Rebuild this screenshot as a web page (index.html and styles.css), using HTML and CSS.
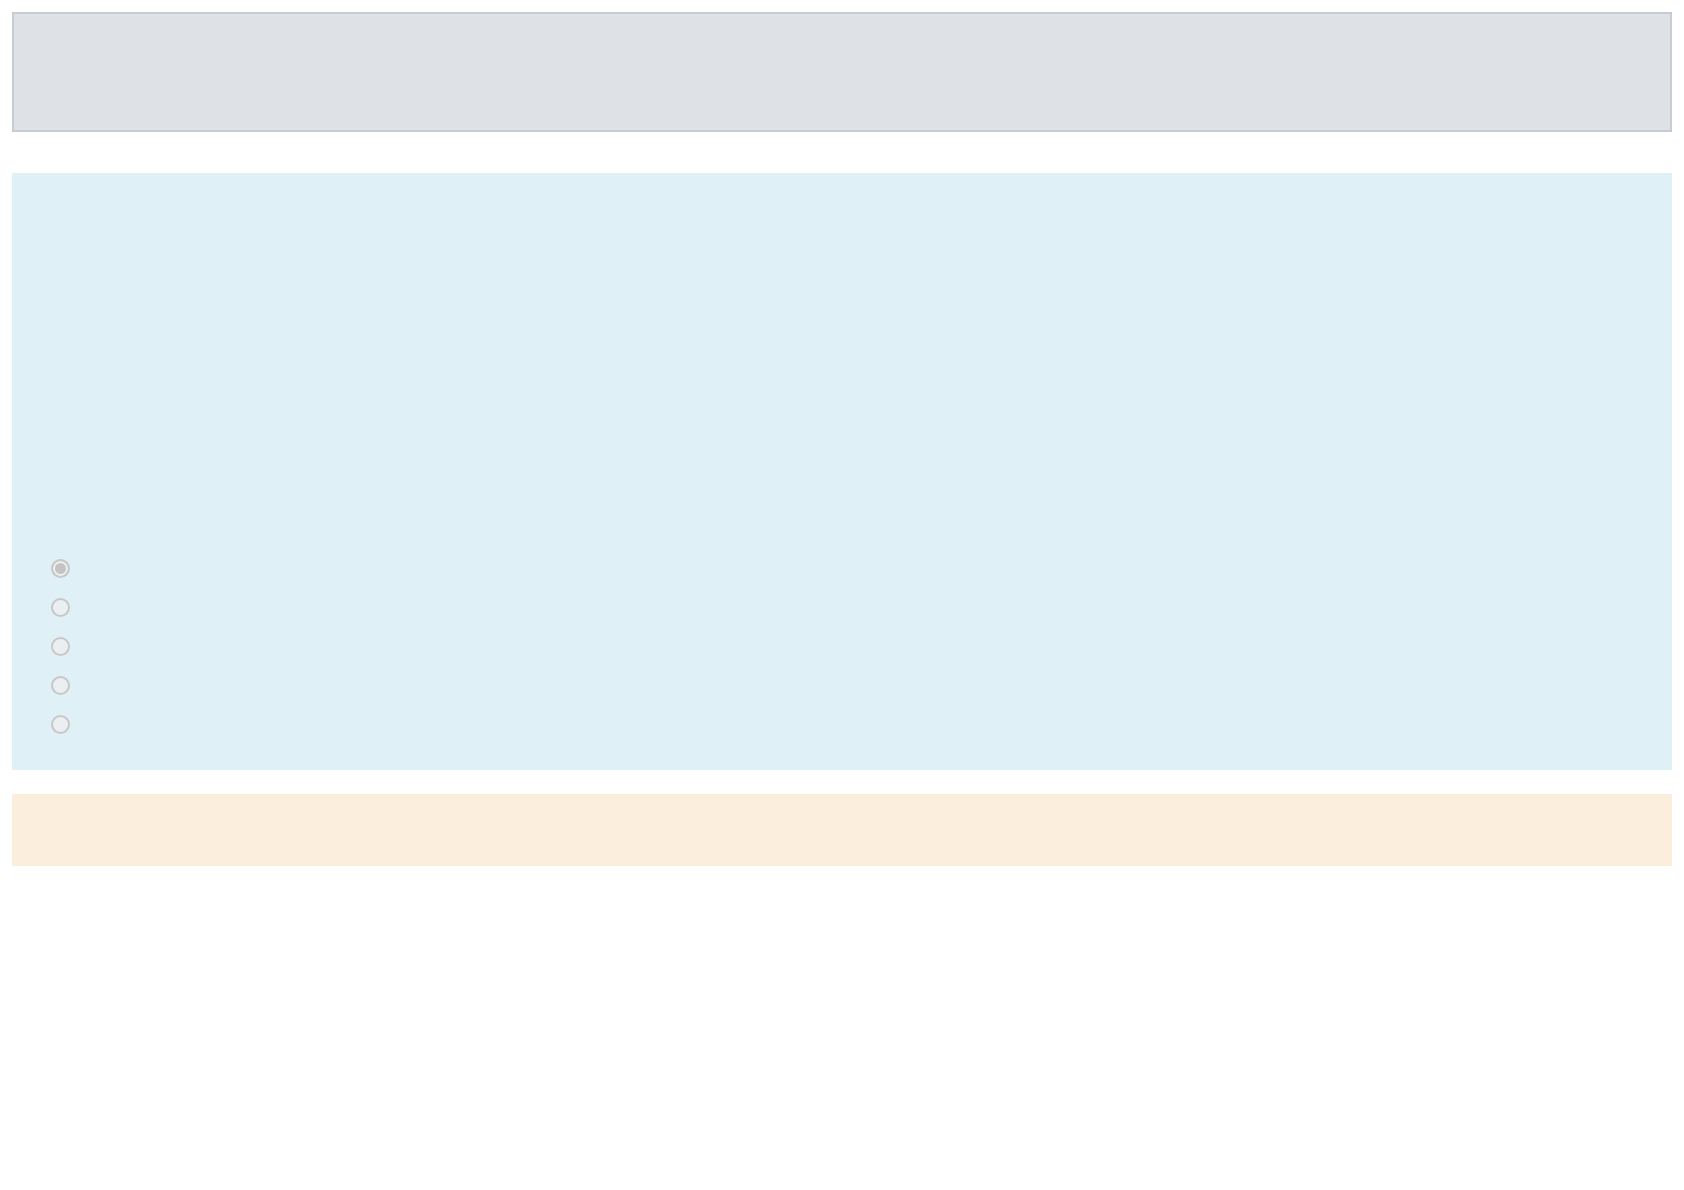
FILE: index.html
```html
<!DOCTYPE html>
<html>

<head>
	<meta charset="utf-8" />
	<title>Options</title>
	<link rel="stylesheet" href="styles.css">
</head>

<body>
	<div id="page">
		<div id="header"></div>
		<div id="panel">
			<div class="options">
				<input type="radio" name="choice" class="option" checked disabled />
				<input type="radio" name="choice" class="option" disabled />
				<input type="radio" name="choice" class="option" disabled />
				<input type="radio" name="choice" class="option" disabled />
				<input type="radio" name="choice" class="option" disabled />
			</div>
		</div>
		<div id="notice"></div>
	</div>
</body>

</html>
```

FILE: styles.css
```css
html,
body {
	margin: 0;
	padding: 0;
	background: #fff;
	font-family: "Liberation Sans", Arial, sans-serif;
}

#page {
	display: flex;
	flex-direction: column;
	padding: 12px;
}

#header {
	box-sizing: border-box;
	height: 120px;
	background: #dee1e6;
	border: solid 2px #c6ccd4;
}

#panel {
	box-sizing: border-box;
	height: 597px;
	margin-top: 41px;
	padding: 386px 0 0 39px;
	background: #dff1f7;
}

.options {
	display: flex;
	flex-direction: column;
	align-items: flex-start;
	gap: 20px;
}

/* disabled radios, drawn by hand so the size stays even */
.option {
	-webkit-appearance: none;
	appearance: none;
	box-sizing: border-box;
	width: 19px;
	height: 19px;
	margin: 0;
	border: solid 2px #c8c8c8;
	border-radius: 50%;
	background: #ebeff1;
}

.option:checked {
	background: #c4c4c4;
	box-shadow: inset 0 0 0 2px #eef1f3;
}

#notice {
	height: 72px;
	margin-top: 24px;
	background: #fbeedc;
}
```
